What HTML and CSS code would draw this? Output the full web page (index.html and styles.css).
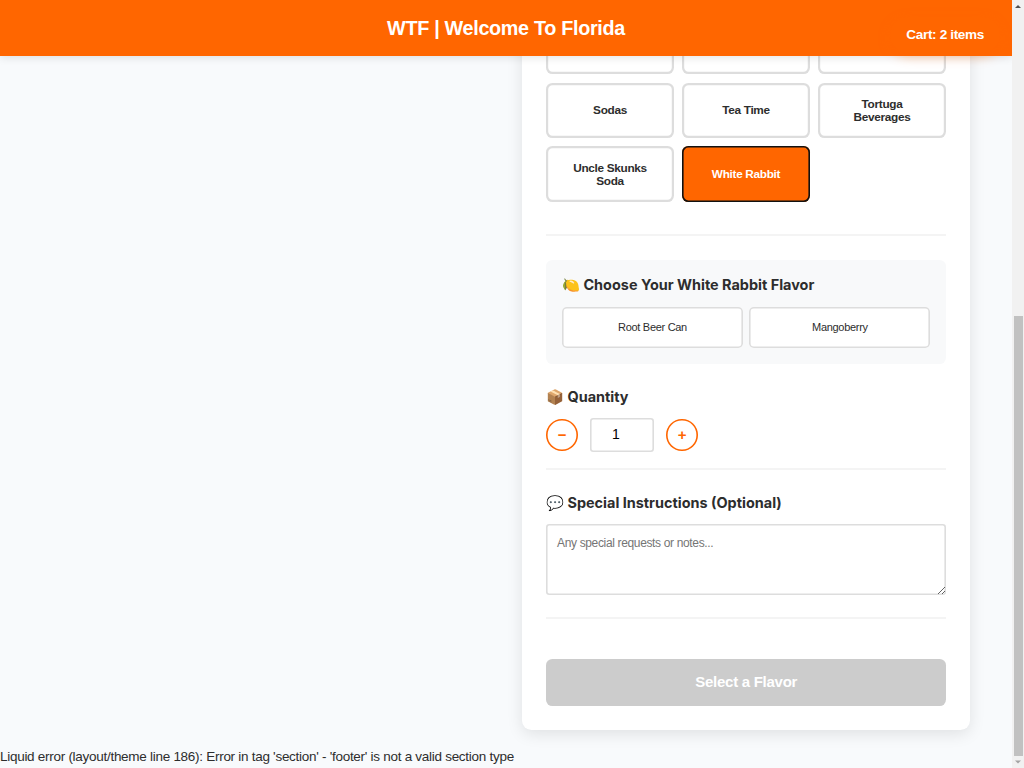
FILE: index.html
```html
<!DOCTYPE html>
<html lang="en">
<head>
<meta charset="utf-8">
<title>WTF | Welcome To Florida</title>
<link rel="stylesheet" href="styles.css">
</head>
<body>
<div class="page">
  <header class="header"><h1 class="brand">WTF | Welcome To Florida</h1></header>
  <div class="cart">Cart: 2 items</div>
  <main class="main">
    <section class="card">
      <div class="lines">
        <button class="line"></button><button class="line"></button><button class="line"></button>
        <button class="line">Sodas</button><button class="line">Tea Time</button><button class="line">Tortuga Beverages</button>
        <button class="line">Uncle Skunks Soda</button><button class="line selected">White Rabbit</button>
      </div>
      <div class="divider"></div>
      <div class="flavors">
        <h3 class="heading">🍋 Choose Your White Rabbit Flavor</h3>
        <div class="flavor-grid">
          <button class="flavor">Root Beer Can</button><button class="flavor">Mangoberry</button>
        </div>
      </div>
      <div class="quantity">
        <h3 class="heading">📦 Quantity</h3>
        <div class="stepper">
          <button class="round">−</button>
          <input class="amount" type="text" value="1">
          <button class="round">+</button>
        </div>
      </div>
      <div class="notes">
        <h3 class="heading">💬 Special Instructions (Optional)</h3>
        <textarea class="note-box" placeholder="Any special requests or notes..."></textarea>
      </div>
      <button class="submit">Select a Flavor</button>
    </section>
  </main>
  <footer class="error">Liquid error (layout/theme line 186): Error in tag 'section' - 'footer' is not a valid section type</footer>
</div>
<div class="scrollbar">
  <svg class="arrow" viewBox="0 0 12 12"><path d="M3 8 6 5l3 3z" fill="#505050"/></svg>
  <div class="thumb"></div>
  <svg class="arrow" viewBox="0 0 12 12"><path d="M3 4.5h6L6 7.5z" fill="#a3a3a3"/></svg>
</div>
</body>
</html>
```
FILE: styles.css
```css
* { box-sizing: border-box; }
body {
  margin: 0;
  height: 768px;
  display: flex;
  overflow: hidden;
  background: #f8fafc;
  color: #2d2d2d;
  font-family: "Liberation Sans", Arial, sans-serif;
  font-size: 13.5px;
}
button, input, textarea { font-family: inherit; margin: 0; }
.page { position: relative; width: 1012px; height: 768px; overflow: hidden; background: #f8fafc; }
.header {
  position: absolute;
  inset: 0 0 auto;
  z-index: 2;
  height: 55.5px;
  display: flex;
  align-items: center;
  justify-content: center;
  background: #ff6600;
  box-shadow: 0 1.6px 8px rgba(0, 0, 0, .1);
}
.brand { margin: 0; color: #fff; font-size: 19.8px; letter-spacing: -.32px; line-height: 24px; }
.cart {
  position: absolute;
  z-index: 3;
  top: 17px;
  right: 12px;
  padding: 10px 16px 11px;
  border-radius: 20px;
  background: #ff6600;
  box-shadow: 0 3.2px 12px rgba(255, 102, 0, .35);
  color: #fff;
  font-size: 13.6px;
  font-weight: bold;
  letter-spacing: -.36px;
  line-height: 15px;
}
.main { display: flex; justify-content: flex-end; padding-right: 41.6px; }
.card {
  width: 448.4px;
  height: 730.4px;
  padding: 18.7px 24px 0;
  border-radius: 0 0 9.6px 9.6px;
  background: #fff;
  box-shadow: 0 3.2px 16px rgba(0, 0, 0, .1);
}
.lines { display: grid; grid-template-columns: repeat(3, 128px); grid-auto-rows: 55.4px; gap: 8.5px 8px; }
.line {
  padding: 1px 24px 0;
  border: 0;
  border-radius: 6.4px;
  background: #fff;
  box-shadow: inset 0 0 0 2.2px #ddd;
  color: #2d2d2d;
  font-size: 11.8px;
  font-weight: bold;
  letter-spacing: -.31px;
  line-height: 13px;
}
.selected { background: #ff6600; box-shadow: inset 0 0 0 1.6px #111; color: #fff; }
.divider { margin-top: 32.4px; height: 2px; background: #f4f4f4; }
.flavors { margin-top: 23.9px; height: 103.4px; padding: 16px; border-radius: 6.4px; background: #f8f9fa; }
.heading { margin: 0; font-family: Inter, sans-serif; font-size: 14.45px; font-weight: 700; line-height: 18px; }
.flavor-grid { display: grid; grid-template-columns: 1fr 1fr; gap: 6.4px; margin-top: 12.6px; }
.flavor {
  height: 41px;
  border: 0;
  border-radius: 4.8px;
  background: #fff;
  box-shadow: inset 0 0 0 1.6px #ddd;
  color: #2d2d2d;
  font-size: 11px;
  letter-spacing: -.3px;
}
.quantity { height: 106px; padding-top: 24.4px; border-bottom: 2px solid #f4f4f4; }
.stepper { display: flex; align-items: center; gap: 12px; margin-top: 12px; }
.round {
  width: 32px;
  height: 32.5px;
  padding: 0;
  border: 0;
  border-radius: 50%;
  background: #fff;
  box-shadow: inset 0 0 0 1.6px #ff6600;
  color: #ff6600;
  font-size: 15px;
  font-weight: bold;
}
.amount {
  width: 64px;
  height: 34px;
  padding: 0 12px 1px 0;
  border: 0;
  border-radius: 3.2px;
  box-shadow: inset 0 0 0 1.6px #ddd;
  font-size: 14px;
  text-align: center;
}
.notes { height: 149px; padding-top: 24px; border-bottom: 2px solid #f4f4f4; }
.note-box {
  display: block;
  width: 100%;
  height: 71px;
  margin-top: 12.6px;
  padding: 11.5px 11px;
  border: 0;
  border-radius: 3.2px;
  box-shadow: inset 0 0 0 1.6px #ddd;
  font-size: 12px;
  letter-spacing: -.35px;
  outline: 0;
}
.submit {
  display: block;
  width: 100%;
  height: 47px;
  margin-top: 40.5px;
  padding-bottom: 3px;
  border: 0;
  border-radius: 6.4px;
  background: #ccc;
  color: #fff;
  font-size: 15px;
  font-weight: bold;
  letter-spacing: -.27px;
}
.error { margin-top: 17px; letter-spacing: -.28px; line-height: 20px; }
.scrollbar { width: 12px; display: flex; flex-direction: column; background: #f1f1f1; }
.arrow { width: 12px; height: 12px; }
.thumb { width: 8.8px; height: 440px; margin: auto 0 0 1.8px; background: #c1c1c1; }
```
